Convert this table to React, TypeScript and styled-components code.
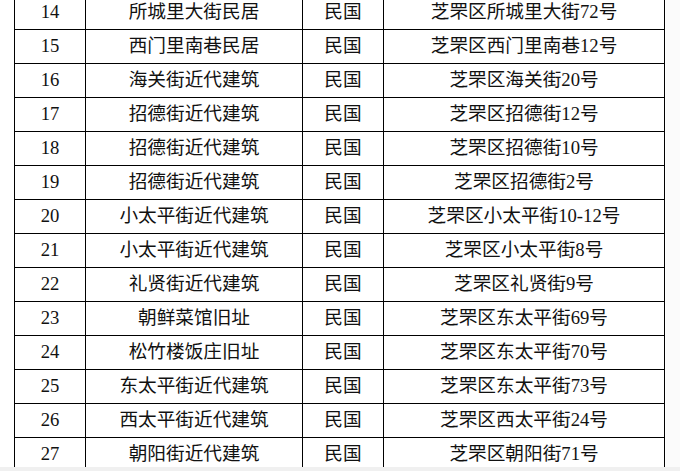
import styled, { createGlobalStyle } from "styled-components";

interface ISite {
  no: number;
  name: string;
  era: string;
  address: string;
}

const sites: ISite[] = [
  { no: 14, name: "所城里大街民居", era: "民国", address: "芝罘区所城里大街72号" },
  { no: 15, name: "西门里南巷民居", era: "民国", address: "芝罘区西门里南巷12号" },
  { no: 16, name: "海关街近代建筑", era: "民国", address: "芝罘区海关街20号" },
  { no: 17, name: "招德街近代建筑", era: "民国", address: "芝罘区招德街12号" },
  { no: 18, name: "招德街近代建筑", era: "民国", address: "芝罘区招德街10号" },
  { no: 19, name: "招德街近代建筑", era: "民国", address: "芝罘区招德街2号" },
  { no: 20, name: "小太平街近代建筑", era: "民国", address: "芝罘区小太平街10-12号" },
  { no: 21, name: "小太平街近代建筑", era: "民国", address: "芝罘区小太平街8号" },
  { no: 22, name: "礼贤街近代建筑", era: "民国", address: "芝罘区礼贤街9号" },
  { no: 23, name: "朝鲜菜馆旧址", era: "民国", address: "芝罘区东太平街69号" },
  { no: 24, name: "松竹楼饭庄旧址", era: "民国", address: "芝罘区东太平街70号" },
  { no: 25, name: "东太平街近代建筑", era: "民国", address: "芝罘区东太平街73号" },
  { no: 26, name: "西太平街近代建筑", era: "民国", address: "芝罘区西太平街24号" },
  { no: 27, name: "朝阳街近代建筑", era: "民国", address: "芝罘区朝阳街71号" },
];

const GlobalStyle = createGlobalStyle`
  html, body {
    margin: 0;
    padding: 0;
    background: #ffffff;
    overflow: hidden;
  }
  body {
    width: 680px;
    height: 471px;
  }
`;

const Page = styled.div`
  width: 680px;
  height: 471px;
  overflow: hidden;
  background: linear-gradient(to right, #ffffff 666px, #fbfbfb 666px);
`;

const Table = styled.table`
  margin: -5px 0 0 14px;
  border-collapse: collapse;
  table-layout: fixed;
  width: 651px;
  font-family: "Liberation Serif", "Noto Sans CJK SC", serif;
  font-size: 18.67px;
  color: #111;
  background: #fff;
`;

const Row = styled.tr`
  height: 34px;
`;

const Cell = styled.td`
  border: 1px solid #000;
  padding: 0;
  text-align: center;
  vertical-align: middle;
  line-height: 1;
  white-space: nowrap;
`;

const ScrollBar = styled.div`
  position: fixed;
  left: 0;
  bottom: 0;
  width: 680px;
  height: 4px;
  background: #f0f0f0;
`;

const App = () => {
  return (
    <Page>
      <GlobalStyle />
      <Table>
        <colgroup>
          <col style={{ width: 71 }} />
          <col style={{ width: 217 }} />
          <col style={{ width: 81 }} />
          <col style={{ width: 281 }} />
        </colgroup>
        <tbody>
          {sites.map((site) => (
            <Row key={site.no}>
              <Cell>{site.no}</Cell>
              <Cell>{site.name}</Cell>
              <Cell>{site.era}</Cell>
              <Cell>{site.address}</Cell>
            </Row>
          ))}
        </tbody>
      </Table>
      <ScrollBar />
    </Page>
  );
};

export default App;
